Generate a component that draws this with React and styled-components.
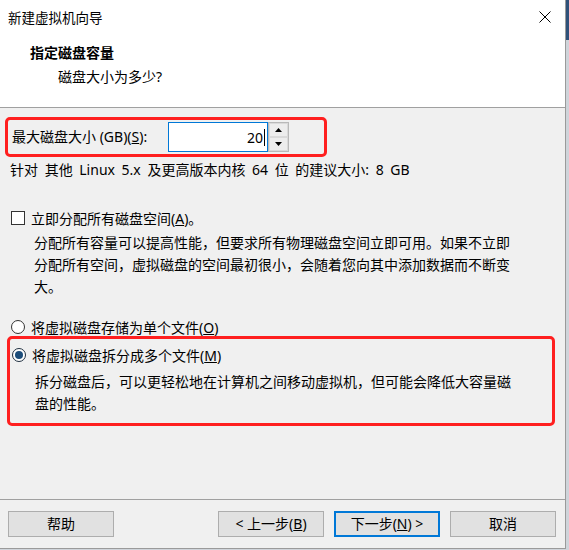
import React from "react";
import styled, { createGlobalStyle } from "styled-components";

const GlobalStyle = createGlobalStyle`
  html, body {
    margin: 0;
    padding: 0;
    width: 569px;
    height: 550px;
    overflow: hidden;
    background: linear-gradient(#2f527a 0 40px, #cfd4da 40px);
  }
  * { box-sizing: border-box; }
`;

const font = `"Noto Sans", "Noto Sans CJK SC", sans-serif`;

// Window frame
const Window = styled.div`
  width: 566px;
  height: 549px;
  display: flex;
  flex-direction: column;
  background: #f0f0f0;
  border-right: 1px solid #9a9a9a;
  border-bottom: 1px solid #9a9a9a;
  font-family: ${font};
  font-size: 14px;
  color: #000;
`;

const Top = styled.div`
  background: #fff;
  height: 108px;
  border-bottom: 1px solid #a0a0a0;
  display: flex;
  flex-direction: column;
`;

const TitleBar = styled.div`
  height: 34px;
  display: flex;
  align-items: center;
  justify-content: space-between;
  padding: 0 12px 0 8px;
  font-size: 13.5px;
`;

const CloseButton = styled.div`
  width: 16px;
  height: 16px;
  display: flex;
  align-items: center;
  justify-content: center;
`;

const Heading = styled.div`
  font-weight: bold;
  font-size: 14px;
  line-height: 20px;
  padding-left: 30px;
  margin-top: 9px;
`;

const SubHeading = styled.div`
  line-height: 20px;
  padding-left: 58px;
  margin-top: 4px;
`;

const Body = styled.div`
  flex: 1;
  display: flex;
  flex-direction: column;
  padding: 9px 0 0 5px;
`;

const Highlight = styled.div`
  border: 3px solid #ff1f1f;
  border-radius: 5px;
  width: ${(p) => p.$width}px;
  margin-top: ${(p) => p.$top || 0}px;
  margin-left: ${(p) => p.$left || 0}px;
  padding: ${(p) => p.$pad};
  display: flex;
  flex-direction: column;
`;

const SizeRow = styled.div`
  display: flex;
  align-items: center;
  height: 34px;
`;

const SizeLabel = styled.span`
  width: 156px;
  line-height: 20px;
`;

const Input = styled.div`
  width: 100px;
  height: 30px;
  border: 1px solid #0078d7;
  background: #fff;
  display: flex;
  align-items: center;
  justify-content: flex-end;
  padding-right: 2px;
`;

const Caret = styled.span`
  display: inline-block;
  width: 1px;
  height: 17px;
  background: #000;
  margin-left: 1px;
`;

const Spinner = styled.div`
  width: 21px;
  height: 30px;
  border: 1px solid #b9b9b9;
  display: flex;
  flex-direction: column;
  background: #f0f0f0;
`;

const SpinButton = styled.div`
  flex: 1;
  display: flex;
  align-items: center;
  justify-content: center;
  border: 1px solid #dadada;
  background: #ededed;
`;

const Text = styled.div`
  line-height: ${(p) => p.$lh || 20}px;
  margin-top: ${(p) => p.$top || 0}px;
  padding-left: ${(p) => p.$left || 0}px;
  word-spacing: ${(p) => p.$ws || 0}px;
`;

const OptionRow = styled.label`
  display: flex;
  align-items: center;
  height: 22px;
  margin-top: ${(p) => p.$top || 0}px;
  padding-left: ${(p) => p.$left || 0}px;
  gap: 6px;
`;

const CheckBox = styled.span`
  width: 14px;
  height: 14px;
  border: 1px solid #333;
  background: #fff;
`;

const Radio = styled.span`
  width: 14px;
  height: 14px;
  border-radius: 50%;
  border: 1px solid ${(p) => (p.$on ? "#1f2f3f" : "#333")};
  background: #fff;
  display: flex;
  align-items: center;
  justify-content: center;
  &::after {
    content: "";
    width: 8px;
    height: 8px;
    border-radius: 50%;
    background: ${(p) => (p.$on ? "#1d4d7a" : "transparent")};
  }
`;

const Footer = styled.div`
  height: 49px;
  border-top: 1px solid #a0a0a0;
  display: flex;
  align-items: flex-start;
  padding: 11px 9px 0 8px;
  gap: 10px;
`;

const Spacer = styled.div`
  flex: 1;
`;

const Button = styled.div`
  width: 106px;
  height: 26px;
  display: flex;
  align-items: center;
  justify-content: center;
  background: #e1e1e1;
  border: ${(p) => (p.$primary ? "2px solid #0078d7" : "1px solid #adadad")};
  line-height: 20px;
`;

const Arrow = ({ up }) => (
  <svg width="7" height="4" viewBox="0 0 7 4">
    <path d={up ? "M0 4 L3.5 0 L7 4 Z" : "M0 0 L3.5 4 L7 0 Z"} fill="#000" />
  </svg>
);

export default function App() {
  return (
    <>
      <GlobalStyle />
      <Window>
        <Top>
          <TitleBar>
            <span>新建虚拟机向导</span>
            <CloseButton>
              <svg width="12" height="12" viewBox="0 0 12 12">
                <path d="M0.5 0.5 L11.5 11.5 M11.5 0.5 L0.5 11.5" stroke="#000" strokeWidth="1" />
              </svg>
            </CloseButton>
          </TitleBar>
          <Heading>指定磁盘容量</Heading>
          <SubHeading>磁盘大小为多少?</SubHeading>
        </Top>

        <Body>
          <Highlight $width={322} $pad="0 0 0 4px">
            <SizeRow>
              <SizeLabel>
                最大磁盘大小 (GB)(<u>S</u>):
              </SizeLabel>
              <Input>
                20<Caret />
              </Input>
              <Spinner>
                <SpinButton>
                  <Arrow up />
                </SpinButton>
                <SpinButton>
                  <Arrow />
                </SpinButton>
              </Spinner>
            </SizeRow>
          </Highlight>

          <Text $top={3} $left={5} $ws={3}>
            针对 其他 Linux 5.x 及更高版本内核 64 位 的建议大小: 8 GB
          </Text>

          <OptionRow $top={27} $left={6}>
            <CheckBox />
            <span>
              立即分配所有磁盘空间(<u>A</u>)。
            </span>
          </OptionRow>
          <Text $lh={22} $top={3} $left={29}>
            分配所有容量可以提高性能，但要求所有物理磁盘空间立即可用。如果不立即
            <br />
            分配所有空间，虚拟磁盘的空间最初很小，会随着您向其中添加数据而不断变
            <br />
            大。
          </Text>

          <OptionRow $top={18} $left={6}>
            <Radio />
            <span>
              将虚拟磁盘存储为单个文件(<u>O</u>)
            </span>
          </OptionRow>

          <Highlight $width={548} $top={-2} $left={2} $pad="5px 0 8px 1px">
            <OptionRow $left={1}>
              <Radio $on />
              <span>
                将虚拟磁盘拆分成多个文件(<u>M</u>)
              </span>
            </OptionRow>
            <Text $lh={22} $top={5} $left={24}>
              拆分磁盘后，可以更轻松地在计算机之间移动虚拟机，但可能会降低大容量磁
              <br />
              盘的性能。
            </Text>
          </Highlight>
        </Body>

        <Footer>
          <Button>帮助</Button>
          <Spacer />
          <Button>
            &lt; 上一步(<u>B</u>)
          </Button>
          <Button $primary>
            下一步(<u>N</u>) &gt;
          </Button>
          <Button>取消</Button>
        </Footer>
      </Window>
    </>
  );
}
